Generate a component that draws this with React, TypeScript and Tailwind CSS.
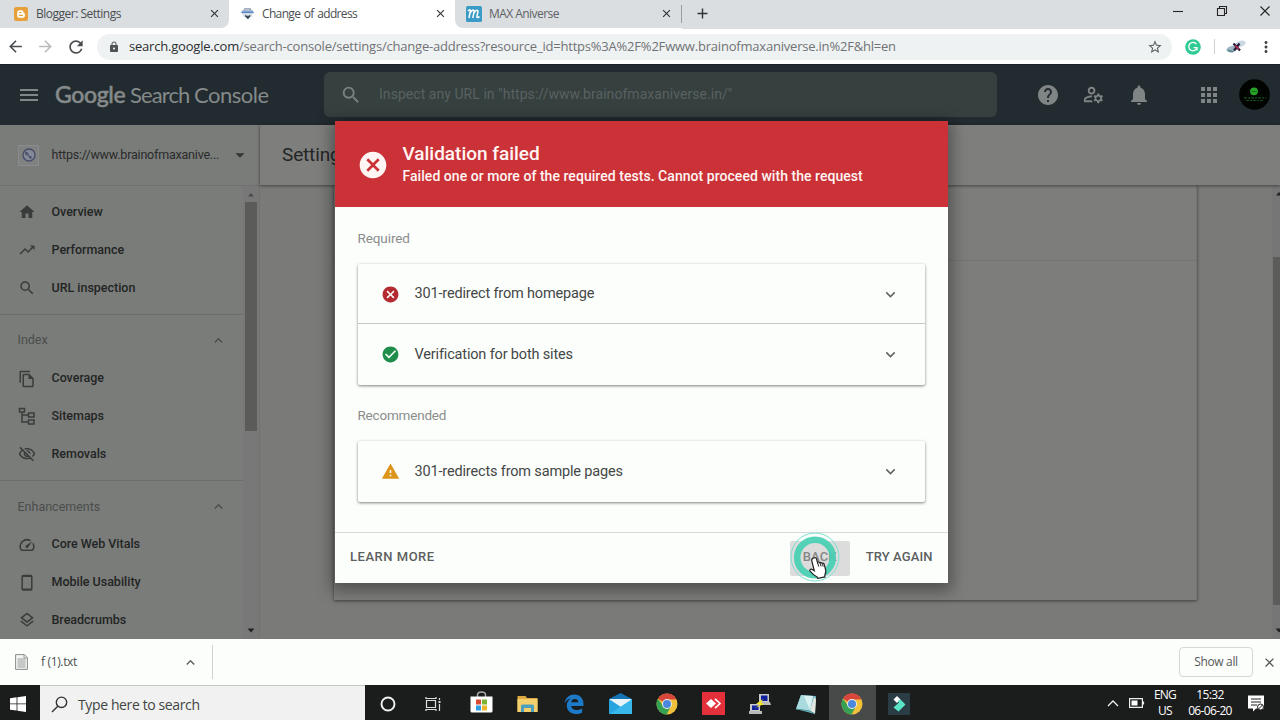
import React from "react";
import {
  MdHome, MdTrendingUp, MdSearch, MdHelp, MdNotifications, MdApps, MdOutlineManageAccounts,
  MdCancel, MdCheckCircle, MdWarning, MdOutlineFileCopy, MdOutlineVisibilityOff, MdOutlineLayers,
  MdExpandMore, MdExpandLess, MdSpeed, MdMenu, MdArrowDropDown, MdClose, MdAdd, MdArrowBack,
  MdArrowForward, MdRefresh, MdLock, MdStarBorder, MdMoreVert,
} from "react-icons/md";

const UI = "font-['Open_Sans','Noto_Sans',sans-serif]";

function BloggerIcon() {
  return (
    <svg className="size-[14px] shrink-0" viewBox="0 0 14 14">
      <rect width="14" height="14" rx="2" fill="#e8a03a" />
      <path d="M5.6 3.2h1.7c1.3 0 2.2.9 2.2 2.1 0 .7.3.9.7.9.5 0 .7.3.7.7v1.5c0 1.4-1 2.4-2.4 2.4H5.6c-1.4 0-2.4-1-2.4-2.4V5.6c0-1.400 1-2.400 2.400-2.400z" fill="#fff" />
      <path d="M5.500 5.500h1.600M5.500 8.400h3" stroke="#e8a03a" strokeWidth="1.100" strokeLinecap="round" />
    </svg>
  );
}

function ConsoleIcon() {
  return (
    <svg className="h-[13px] w-[13px] shrink-0" viewBox="0 0 14 13">
      <path d="M4 3V1.500h6V3" fill="none" stroke="#8797ad" strokeWidth="1.300" />
      <path d="M2 2.500h10l1 1.200H1z" fill="#a9b7ca" />
      <path d="M1 4h12l1 2H0z" fill="#5b87c7" />
      <path d="M1 6h12v1.500H1z" fill="#cfd8e4" />
      <path d="M2 7.500h10V10H2z" fill="#d8dde4" />
      <path d="M4.500 7.500v2.500l3 2.700 2.500-2.700V7.500L8.500 8.800H6z" fill="#3f4a58" />
    </svg>
  );
}

function Tab({ icon, title, className, gap }: { icon: React.ReactNode; title: React.ReactNode; className: string; gap: string }) {
  return (
    <div className={"flex h-[28px] items-center pb-[1px] " + className}>
      <div className={"flex flex-1 items-center " + gap}>{icon}{title}</div>
      <MdClose className="size-[13px] text-[#2f3133]" />
    </div>
  );
}

function TabStrip() {
  return (
    <div className="flex h-[29px] bg-[#dadee1]">
      <div className="flex w-[682px] bg-white">
        <Tab className="w-[229px] rounded-br-lg bg-[#dadee1] pl-[14px] pr-[8px]" gap="gap-2" icon={<BloggerIcon />}
          title={<span className="text-[12px] tracking-[-0.5px] text-[#4b4e51]">Blogger: Settings</span>} />
        <Tab className="w-[226px] bg-white pl-[12px] pr-[8px]" gap="gap-2" icon={<ConsoleIcon />}
          title={<span className="text-[12px] tracking-[-0.65px] text-[#4b4e51] [word-spacing:1px]">Change of address</span>} />
        <Tab className="w-[227px] rounded-bl-lg bg-[#dadee1] pl-[11px] pr-[9px]" gap="gap-[7px]"
          icon={
            <svg className="size-[16px]" viewBox="0 0 16 16">
              <rect width="16" height="16" rx="1.500" fill="#3a9cc6" />
              <path d="M2 5c1.500-2 2.600-1.300 2.200.5L3 12M4.300 7C6 3.300 8.600 3.300 8 6l-1.200 6M8 7c1.600-3.700 4.500-3.600 3.900-.9l-1 4.200c-.3 1.600 1.200 1.800 2.600.3" stroke="#fff" strokeWidth="1.500" fill="none" />
            </svg>
          }
          title={<span className="text-[12px] tracking-[-0.55px] text-[#5f6265]">MAX Aniverse</span>} />
      </div>
      <div className="flex flex-1 items-center pb-[2px]">
        <div className="-ml-px h-[18px] w-px bg-[#9a9da0]" />
        <MdAdd className="ml-[12px] size-[17px] text-[#2f3133]" />
        <div className="flex-1" />
        <svg className="mb-[5px] h-[14px] w-[98px]" viewBox="0 0 98 14" fill="none" stroke="#252525" strokeWidth="1.100">
          <path d="M0 7.500h10" />
          <path d="M44.500 4.500h7v7h-7zM46.500 4V2.500h7v7H52" />
          <path d="M87.500 2.500l9 9M96.500 2.500l-9 9" />
        </svg>
        <div className="w-[9px]" />
      </div>
    </div>
  );
}

function Toolbar() {
  return (
    <div className="flex h-[35px] items-center bg-white pl-[6px]">
      <MdArrowBack className="size-[19px] text-[#4a4d50]" />
      <MdArrowForward className="ml-[11px] size-[19px] text-[#b8babc]" />
      <MdRefresh className="ml-[11px] size-[20px] text-[#4a4d50]" />
      <div className="ml-[11px] flex h-[26px] w-[1075px] items-center rounded-full bg-[#eff2f2] pl-[11px] pr-[9px]">
        <MdLock className="size-[12px] text-[#505356]" />
        <span className="ml-[9px] flex-1 whitespace-nowrap text-[13px] tracking-[-0.205px] text-[#707376]">
          <span className="text-[#2c2f32]">search.google.com</span>/search-console/settings/change-address?resource_id=https%3A%2F%2Fwww.brainofmaxaniverse.in%2F&amp;hl=en
        </span>
        <MdStarBorder className="size-[16px] text-[#5c5f62]" />
      </div>
      <svg className="ml-[13px] size-[16px]" viewBox="0 0 16 16">
        <circle cx="8" cy="8" r="7.800" fill="#2fcb94" />
        <path d="M11.400 5.200A4.200 4.200 0 1 0 12 8.700H8.600M12 8.700v2.800" fill="none" stroke="#fff" strokeWidth="1.300" />
      </svg>
      <div className="ml-[13px] h-[15px] w-px bg-[#cfd1d3]" />
      <svg className="ml-[11px] h-[16px] w-[20px]" viewBox="0 0 20 16">
        <ellipse cx="6" cy="10" rx="5.500" ry="3" fill="#9db5c0" transform="rotate(-12 6 10)" />
        <ellipse cx="14.500" cy="4.800" rx="5.300" ry="3" fill="#c9d9e2" transform="rotate(-16 14.500 4.800)" />
        <path d="M1 10.500l7 1.500-1 1.500c-3 0-5.500-1-6-3z" fill="#5f8496" />
        <path d="M7.500 4.500l6.500 7M13.500 4.500L8 11.500" stroke="#291a3d" strokeWidth="2.300" />
        <path d="M9 6.500l4 3.500" stroke="#c22f4b" strokeWidth="1.600" />
      </svg>
      <MdMoreVert className="ml-[11px] size-[18px] text-[#44474a]" />
    </div>
  );
}

function ConsoleHeader() {
  return (
    <div className="flex h-[61px] shrink-0 items-center border-t border-[#1c2227] bg-[#222b2f] pb-[1px] pl-[17px] font-[Roboto,sans-serif]">
      <MdMenu className="size-[24px] text-[#82888a]" />
      <div className="ml-[14px] flex w-[215px] items-baseline font-['Lato',sans-serif] text-[22px] text-[#858a8b]">
        <span className="w-[75px] text-[23px] font-medium tracking-[-0.35px] [-webkit-text-stroke:0.5px_#858a8b]">Google</span>
        <span className="w-[64px] tracking-[-0.9px]">Search</span>
        <span className="tracking-[-0.5px]">Console</span>
      </div>
      <div className="ml-[54px] flex h-[45px] w-[673px] items-center rounded-md bg-[#36403f] pl-[16px]">
        <MdSearch className="size-[22px] text-[#7a8282]" />
        <span className="ml-[17px] text-[14px] tracking-[0.05px] text-[#596162]">Inspect any URL in "https://www.brainofmaxaniverse.in/"</span>
      </div>
      <MdHelp className="ml-[39px] size-[24px] text-[#7f8485]" />
      <MdOutlineManageAccounts className="ml-[22px] size-[23px] text-[#7f8485]" />
      <MdNotifications className="ml-[22px] size-[24px] text-[#7f8485]" />
      <MdApps className="ml-[46px] size-[24px] text-[#7f8485]" />
      <svg className="ml-[18px] size-[31px]" viewBox="0 0 31 31">
        <circle cx="15.500" cy="15.500" r="15.300" fill="#020402" />
        <circle cx="15" cy="12.300" r="3.900" fill="#28a329" />
        <path d="M12.500 12.500h5" stroke="#147217" strokeWidth="1.200" />
        <path d="M5 18.800h22M7 21.500h18" stroke="#174d1b" strokeWidth="1.200" strokeDasharray="3 1 2 1" />
      </svg>
    </div>
  );
}

function SitemapIcon() {
  return (
    <svg className="size-[18px]" viewBox="0 0 18 18" fill="none" stroke="currentColor" strokeWidth="1.500">
      <path d="M1.500 1.500h5v3.500h-5zM10.500 6h5.500v4h-5.500zM10.500 13h5.500v4h-5.500zM4 5v10h6.500M4 8h6.500" />
    </svg>
  );
}

function PhoneIcon() {
  return (
    <svg className="size-[18px]" viewBox="0 0 18 18" fill="none" stroke="currentColor">
      <rect x="4.200" y="1.500" width="9.600" height="14.500" rx="1" strokeWidth="1.500" />
      <path d="M4.500 2.300h9M4.500 15.200h9" strokeWidth="1.600" />
    </svg>
  );
}

function NavItem({ icon, label }: { icon: React.ReactNode; label: string }) {
  return (
    <div className="flex h-[37.800px] items-center pl-[18px] text-[#3a3c3b]">
      <span className="flex w-[33.500px] items-center">{icon}</span>
      <span className="text-[12.500px] font-medium tracking-[-0.02px] text-[#232524]">{label}</span>
    </div>
  );
}

function NavSection({ label }: { label: string }) {
  return (
    <div className="flex h-[37.800px] items-center justify-between pl-[17.500px] pr-[16px]">
      <span className="text-[12.500px] tracking-[0px] text-[#4b4d4c]">{label}</span>
      <MdExpandLess className="size-[17px] text-[#4b4d4c]" />
    </div>
  );
}

function Sidebar() {
  return (
    <div className="flex w-[260px] shrink-0 flex-col border-r border-[#717371] bg-[#7a7c7a]">
      <div className="flex h-[61px] shrink-0 items-center border-b border-[#6f716f] pl-[18px]">
        <div className="flex size-[21px] items-center justify-center border border-[#8a8c8b] bg-[#808281]">
          <svg className="size-[14px]" viewBox="0 0 14 14">
            <circle cx="7" cy="7" r="6" fill="#858a98" stroke="#474b66" strokeWidth="1.300" />
            <path d="M3 3.500l3 1 1 3 3 1-1 3-2-2-1-2-3-1z" fill="#51566f" />
          </svg>
        </div>
        <span className="ml-[12.500px] w-[177.500px] text-[12.500px] tracking-[-0.2px] text-[#292b2a]">https://www.brainofmaxanive...</span>
        <MdArrowDropDown className="size-[22px] text-[#333534]" />
      </div>
      <div className="flex min-h-0 flex-1">
        <div className="w-[243px] overflow-hidden pt-[7.500px]">
          <NavItem icon={<MdHome className="size-[18px]" />} label="Overview" />
          <NavItem icon={<MdTrendingUp className="size-[18px]" />} label="Performance" />
          <NavItem icon={<MdSearch className="size-[18px]" />} label="URL inspection" />
          <div className="mb-[7px] mt-[7px] h-px bg-[#6c6e6c]" />
          <NavSection label="Index" />
          <NavItem icon={<MdOutlineFileCopy className="size-[18px]" />} label="Coverage" />
          <NavItem icon={<SitemapIcon />} label="Sitemaps" />
          <NavItem icon={<MdOutlineVisibilityOff className="size-[18px]" />} label="Removals" />
          <div className="mb-[7px] mt-[7px] h-px bg-[#6c6e6c]" />
          <NavSection label="Enhancements" />
          <NavItem icon={<MdSpeed className="size-[18px]" />} label="Core Web Vitals" />
          <NavItem icon={<PhoneIcon />} label="Mobile Usability" />
          <NavItem icon={<MdOutlineLayers className="size-[18px]" />} label="Breadcrumbs" />
        </div>
        <div className="flex w-[16px] flex-col items-center bg-[#777877] pt-[6px]">
          <svg className="h-[5px] w-[8px]" viewBox="0 0 8 5"><path d="M1 4.500L4 1l3 3.500z" fill="#4a4c4a" /></svg>
          <div className="mt-[5px] h-[229px] w-[12px] bg-[#5b5c5a]" />
          <div className="flex-1" />
          <svg className="mb-[6px] h-[5px] w-[8px]" viewBox="0 0 8 5"><path d="M.5.5h7L4 4.500z" fill="#222" /></svg>
        </div>
      </div>
    </div>
  );
}

function Content() {
  return (
    <div className="flex min-w-0 flex-1 flex-col bg-[#7a7b79]">
      <div className="z-10 flex h-[60px] shrink-0 items-center bg-[#7e7e7d] pl-[22px] shadow-[0_1px_3px_rgba(0,0,0,0.45)]">
        <span className="text-[19px] tracking-[-0.15px] text-[#242625]">Settings</span>
      </div>
      <div className="flex flex-1">
        <div className="ml-[74px] h-[415px] w-[863px] border-r border-[#747573] bg-[#7d7d7c] shadow-[0_1px_3px_rgba(0,0,0,0.5)]">
          <div className="h-[76px] border-b border-[#747473]" />
        </div>
        <div className="flex-1" />
        <div className="flex w-[8px] flex-col items-end bg-[#757675] pt-[6px]">
          <svg className="h-[5px] w-[5px]" viewBox="0 0 5 5"><path d="M1 4.500L4 1l3 3.500z" fill="#222" /></svg>
          <div className="mt-[61px] h-[348px] w-[7px] bg-[#5c5d5b]" />
          <div className="flex-1" />
          <svg className="mb-[6px] h-[5px] w-[5px]" viewBox="0 0 5 5"><path d="M.5.5h7L4 4.500z" fill="#222" /></svg>
        </div>
      </div>
    </div>
  );
}

function TestRow({ icon, label, className }: { icon: React.ReactNode; label: React.ReactNode; className: string }) {
  return (
    <div className={"flex items-center pl-[23px] pr-[25px] " + className}>
      {icon}
      <span className="ml-[15px] flex-1 text-[14.500px] tracking-[-0.16px] text-[#444746]">{label}</span>
      <MdExpandMore className="size-[19px] text-[#606362]" />
    </div>
  );
}

function PressedPointer() {
  return (
    <svg className="absolute -left-px -top-[9px] h-[52px] w-[52px]" viewBox="0 0 52 52">
      <circle cx="26" cy="25" r="24" fill="none" stroke="#7ddfd0" strokeWidth="1" />
      <circle cx="26" cy="25.500" r="17.800" fill="none" stroke="#45cfb2" strokeOpacity="0.920" strokeWidth="6.500" />
      <path d="M25.200 26.300c1.200-.4 2 .1 2.300 1.100l1 3.600c.5-.8 1.900-.7 2.300.3.700-.7 1.900-.4 2.200.6.900-.5 2 0 2.200 1l1.500 5.600c.4 2.200-.2 3.800-.9 5.200l.2 1.700-7.200 1.500-.7-1.400c-2.700-1.100-4.800-3.300-7-5.800-.8-1 .2-2.600 1.700-1.900l2.500 1.500-2.500-9.900c-.5-1.900.9-2.800 2.400-3.100z" transform="translate(0 -0.500)" fill="#fff" stroke="#222" strokeWidth="1.200" />
      <path d="M28.700 31l1 3.600M31.200 31.200l.9 3.200M33.500 32.200l.7 2.400" stroke="#222" strokeWidth="1" />
    </svg>
  );
}

function Dialog() {
  return (
    <div className="absolute left-[334.500px] top-[121px] z-20 flex h-[462px] w-[613px] flex-col bg-[#fcfefc] shadow-[0_4px_14px_4px_rgba(0,0,0,0.35)]">
      <div className="flex h-[86px] shrink-0 items-center bg-[#ca3238] pl-[22px] pt-[2px] text-[#fff5f3]">
        <MdCancel className="size-[32px]" />
        <div className="mb-[3px] ml-[14px]">
          <div className="text-[19px] font-medium leading-[25px] tracking-[-0.02px]">Validation failed</div>
          <div className="text-[14px] font-medium leading-[20px] tracking-[0.045px]">Failed one or more of the required tests. Cannot proceed with the request</div>
        </div>
      </div>
      <div className="flex flex-1 flex-col px-[23px]">
        <div className="flex h-[57px] items-center pt-[5px] text-[13.500px] tracking-[-0.1px] text-[#8b8d8c]">Required</div>
        <div className="rounded-[2px] shadow-[0_1px_3px_rgba(0,0,0,0.5)]">
          <TestRow className="h-[60px] border-b border-[#c5c7c5] pt-[1px]" icon={<MdCancel className="size-[19px] text-[#b32a30]" />} label="301-redirect from homepage" />
          <TestRow className="h-[61px]" icon={<MdCheckCircle className="size-[19px] text-[#1e8e4a]" />} label="Verification for both sites" />
        </div>
        <div className="flex h-[56px] items-center pt-[5px] text-[13.500px] tracking-[-0.2px] text-[#8b8d8c]">Recommended</div>
        <div className="rounded-[2px] shadow-[0_1px_3px_rgba(0,0,0,0.5)]">
          <TestRow className="h-[61px]" icon={<MdWarning className="size-[19px] text-[#dd941b]" />} label="301-redirects from sample pages" />
        </div>
      </div>
      <div className="flex h-[51px] items-center border-t border-[#d8dad8] pb-[2px] pl-[15.500px] pr-[15px] text-[13px] font-medium text-[#5c5f5e]">
        <span className="flex-1 tracking-[0.520px]">LEARN MORE</span>
        <div className="relative mr-[16px] mt-[2px] flex h-[35px] w-[60px] items-center justify-center rounded-[2px] bg-[#dcdcdc] pb-[2px] tracking-[0.1px] text-[#858786]">
          BACK
          <PressedPointer />
        </div>
        <span className="tracking-[0.1px]">TRY AGAIN</span>
      </div>
    </div>
  );
}

function DownloadBar() {
  return (
    <div className="flex h-[46px] items-center bg-[#fcfefc] pl-[15px]">
      <div className="flex h-[34px] w-[198px] items-center border-r border-[#d0d2d1] pr-[13px]">
        <svg className="h-[16px] w-[13px]" viewBox="0 0 13 16">
          <path d="M.6.6h8.800l3 3v11.800H.6z" fill="#f2f3f2" stroke="#8a8c8b" />
          <path d="M9 .6v3.400h3.400M2.500 5h8M2.500 7h8M2.500 9h8M2.500 11h8M2.500 13h8" stroke="#9a9c9b" fill="none" />
        </svg>
        <span className="ml-[13px] flex-1 text-[12px] tracking-[-0.35px] text-[#4c4f4e]">f (1).txt</span>
        <MdExpandLess className="size-[17px] text-[#5c5f5e]" />
      </div>
      <div className="flex-1" />
      <div className="flex h-[30px] w-[74px] items-center justify-center rounded-[4px] border border-[#d5d8d6] text-[12px] font-medium tracking-[-0.35px] text-[#56595a]">Show all</div>
      <MdClose className="ml-[9px] mr-[3px] size-[15px] text-[#555857]" />
    </div>
  );
}

function ChromeIcon() {
  return (
    <svg className="size-[22px]" viewBox="0 0 22 22">
      <circle cx="11" cy="11" r="10.500" fill="#f2c13c" />
      <path d="M11 11L1.900 5.750A10.500 10.500 0 0 1 20.100 5.750L20 6.500H11z" fill="#d8453b" />
      <path d="M1.900 5.750A10.500 10.500 0 0 0 10.500 21.500L15 13.200 11 11 6.500 12z" fill="#36a152" />
      <circle cx="11" cy="11" r="5" fill="#f0efe9" />
      <circle cx="11" cy="11" r="4" fill="#4b87dc" />
    </svg>
  );
}

function Taskbar() {
  return (
    <div className="flex h-[35px] bg-[#1b1c1c]">
      <div className="flex w-[40px] items-center pl-[10px] pt-[2px]">
        <svg className="size-[16px]" viewBox="0 0 16 16" fill="#fff"><path d="M0 2.200l6.600-.9v6.200H0zM7.400 1.200L16 0v7.500H7.400zM0 8.300h6.600v6.300L0 13.700zM7.400 8.300H16V16l-8.600-1.300z" /></svg>
      </div>
      <div className="flex w-[325px] items-center border-t border-[#c5c7c6] bg-[#f0f1f0] pl-[11px] pt-[2px]">
        <svg className="size-[17px]" viewBox="0 0 17 17" fill="none" stroke="#303332" strokeWidth="1.400"><circle cx="10.500" cy="6.300" r="5.200" /><path d="M6.800 10.200L1 16" /></svg>
        <span className="ml-[10px] text-[14px] tracking-[-0.38px] text-[#424544]">Type here to search</span>
      </div>
      <div className="grid w-[557px] grid-cols-12 [&>div]:flex [&>div]:items-center [&>div]:justify-center [&>div]:pt-[2px]">
        <div>
          <svg className="size-[16px]" viewBox="0 0 16 16"><circle cx="8" cy="8" r="6.500" fill="none" stroke="#f2f2f2" strokeWidth="1.900" /></svg>
        </div>
        <div>
          <svg className="mr-[4px] h-[14px] w-[16px]" viewBox="0 0 16 14" fill="none" stroke="#ddd" strokeWidth="1.200"><path d="M1.500 3.500h9v7h-9zM1 0v1.500h10V0M1 14v-1.500h10V14M14.500 1v2M14.500 7v7" /><path d="M13.500 5h2" strokeWidth="2" /></svg>
        </div>
        <div>
          <svg className="mb-[3px] h-[22px] w-[23px]" viewBox="0 0 23 22"><path d="M7.500 6V4c0-4 8-4 8 0v2" fill="none" stroke="#a8abaa" strokeWidth="1.500" /><path d="M.5 5.500h22V20q0 1.500-1.500 1.500H2Q.5 21.500.5 20z" fill="#fff" /><path d="M6 8.500h5v5H6z" fill="#d94a34" /><path d="M12 8.500h5v5h-5z" fill="#7cb42f" /><path d="M6 14.500h5v5H6z" fill="#2d9fe0" /><path d="M12 14.500h5v5h-5z" fill="#efb52a" /></svg>
        </div>
        <div>
          <svg className="h-[18px] w-[21px]" viewBox="0 0 21 18"><path d="M.5 1h8l1.500 2h10.500v14H.5z" fill="#dda83f" /><path d="M.5 4h20v13H.5z" fill="#f3d06d" /><path d="M4 17v-6q0-1.500 1.500-1.500h10Q17 9.500 17 11v6h-3v-4H7v4z" fill="#4c9fbd" /></svg>
        </div>
        <div>
          <svg className="size-[20px]" viewBox="0 0 20 20"><path d="M.5 9.300C1.500 3.500 5.500.5 10.500.5c5.500 0 9 4 9 9v2.400H7.200c.3 2.700 2.600 4 5.400 4 2.100 0 4-.6 5.600-1.500v4c-1.900 1-4 1.500-6.400 1.500-5.500 0-9-3.200-9-8.300 0-3 1.500-5.500 4.200-7C4.100 5.200 2 6.600.5 9.300zM7.300 8.200h6.900c0-2-1.200-3.200-3.300-3.200-2 0-3.300 1.200-3.600 3.200z" fill="#1c7ac8" /></svg>
        </div>
        <div>
          <svg className="h-[21px] w-[23px]" viewBox="0 0 23 21"><path d="M0 6L11.500 0 23 6v15H0z" fill="#1473b5" /><path d="M1 6h21v7l-10.500 4L1 13z" fill="#e9f4fa" /><path d="M0 6l12 8-12 7z" fill="#27a4df" /><path d="M23 6L9 15.500 0 21h23z" fill="#38b8ea" /></svg>
        </div>
        <div><ChromeIcon /></div>
        <div>
          <svg className="size-[23px]" viewBox="0 0 23 23"><path d="M0 0h23v23H0z" fill="#e4303a" /><path d="M4 11.500L9 7l5 4.500L9 16z" fill="#fff" /><path d="M13 6.800l5 4.700-5 4.700" fill="none" stroke="#fff" strokeWidth="1.700" /></svg>
        </div>
        <div>
          <svg className="size-[22px]" viewBox="0 0 22 22"><path d="M10 1h10v8H10zM1 11h10v7H1z" fill="#c8cacc" /><path d="M12 2.500h6.500V8H12zM3 12.500h6.500V17H3z" fill="#10219c" /><path d="M9 9h12l1 3H10zM0 18h13v3H0z" fill="#b9bab8" /><path d="M14 6l-7 5 4 .5L6 15l9-4-3-1z" fill="#f3e51f" /></svg>
        </div>
        <div>
          <svg className="h-[22px] w-[22px]" viewBox="0 0 22 22"><path d="M6 2l15 1-1 18L1 16z" fill="#6db8bd" /><path d="M6 2l12 1-3 15L1 16z" fill="#a9dade" /><path d="M9 3l9 0-3 14z" fill="#d9f1f1" /><path d="M15 18l5 3 1-15-2-2z" fill="#e4e6df" /><path d="M1 16l14 2 5 3" fill="none" stroke="#4a959d" /></svg>
        </div>
        <div className="bg-[#484949]"><ChromeIcon /></div>
        <div>
          <svg className="size-[22px]" viewBox="0 0 22 22"><path d="M0 0h22v22H0z" fill="#2b3d44" /><path d="M5.500 6.500L9 3l3.500 3.500L9 10z" fill="#fff" /><path d="M5.500 14.500l5.500-5-1.500-1.500 3-1.500 5 5-7 7z" fill="#5ae5c6" /></svg>
        </div>
      </div>
      <div className="flex flex-1 items-center justify-end pt-[1px] text-[12px] leading-[16px] text-white">
        <svg className="h-[8px] w-[12px]" viewBox="0 0 12 8"><path d="M1 7l5-5 5 5" fill="none" stroke="#eee" strokeWidth="1.300" /></svg>
        <svg className="ml-[10px] h-[10px] w-[16px]" viewBox="0 0 16 10"><path d="M.6.6h12.800v8.800H.6zM14.500 3.500v3" fill="none" stroke="#eee" strokeWidth="1.200" /><path d="M2.500 2.500h6v5h-6z" fill="#fff" /></svg>
        <div className="ml-[8px] w-[24px] text-center tracking-[-0.75px]">ENG<br />US</div>
        <div className="ml-[9px] w-[48px] whitespace-nowrap text-center tracking-[-0.65px]">15:32<br />06-06-20</div>
        <svg className="ml-[14px] mr-[15px] h-[17px] w-[17px]" viewBox="0 0 17 17"><path d="M0 .5h16v13H8l-3 3v-3H0z" fill="#fff" /><path d="M3 4h10M3 7h10M3 10h6" stroke="#222" strokeWidth="1.200" /><circle cx="12.500" cy="12" r="3" fill="#fff" stroke="#222" /><path d="M10.500 14l4-4" stroke="#222" /></svg>
      </div>
    </div>
  );
}

export default function App() {
  return (
    <div className={"relative flex h-[720px] w-[1280px] flex-col overflow-hidden " + UI}>
      <TabStrip />
      <Toolbar />
      <div className="flex h-[575px] flex-col font-[Roboto,sans-serif]">
        <ConsoleHeader />
        <div className="flex min-h-0 flex-1">
          <Sidebar />
          <Content />
        </div>
        <Dialog />
      </div>
      <DownloadBar />
      <Taskbar />
    </div>
  );
}
